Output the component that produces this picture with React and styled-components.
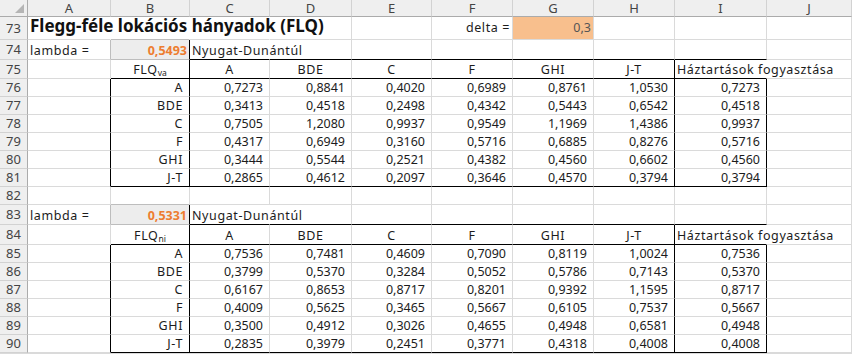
import styled, { createGlobalStyle } from "styled-components";

// Excel-szerű munkalap: FLQ táblák
const columns = ["A", "B", "C", "D", "E", "F", "G", "H", "I", "J"];
const sectors = ["A", "BDE", "C", "F", "GHI", "J-T"];

const flqVa = [
  ["0,7273", "0,8841", "0,4020", "0,6989", "0,8761", "1,0530", "0,7273"],
  ["0,3413", "0,4518", "0,2498", "0,4342", "0,5443", "0,6542", "0,4518"],
  ["0,7505", "1,2080", "0,9937", "0,9549", "1,1969", "1,4386", "0,9937"],
  ["0,4317", "0,6949", "0,3160", "0,5716", "0,6885", "0,8276", "0,5716"],
  ["0,3444", "0,5544", "0,2521", "0,4382", "0,4560", "0,6602", "0,4560"],
  ["0,2865", "0,4612", "0,2097", "0,3646", "0,4570", "0,3794", "0,3794"],
];

const flqNi = [
  ["0,7536", "0,7481", "0,4609", "0,7090", "0,8119", "1,0024", "0,7536"],
  ["0,3799", "0,5370", "0,3284", "0,5052", "0,5786", "0,7143", "0,5370"],
  ["0,6167", "0,8653", "0,8717", "0,8201", "0,9392", "1,1595", "0,8717"],
  ["0,4009", "0,5625", "0,3465", "0,5667", "0,6105", "0,7537", "0,5667"],
  ["0,3500", "0,4912", "0,3026", "0,4655", "0,4948", "0,6581", "0,4948"],
  ["0,2835", "0,3979", "0,2451", "0,3771", "0,4318", "0,4008", "0,4008"],
];

const GlobalStyle = createGlobalStyle`
  html, body {
    margin: 0;
    background: #fff;
    overflow: hidden;
  }
  body {
    font-family: "Noto Sans", "DejaVu Sans", sans-serif;
  }
`;

// k = fekete keret, x = nincs, g = sötétebb szürke, egyébként rácsvonal
const lines = { k: "#000", x: "transparent", g: "#bdbdbd" };
const edge = (v) => lines[v] || "#dadada";
const justify = { left: "flex-start", right: "flex-end", center: "center" };

const Sheet = styled.div`
  display: grid;
  grid-template-columns: 28px 83px 79px 80px 82px 80px 81px 81px 81px 92px 85px;
  grid-template-rows:
    17px 23px 20px 19px repeat(6, 18px)
    18px 20px 20px repeat(6, 18px);
  width: 852px;
  color: #1c1c1c;
  border-bottom: 1px solid #dadada;
`;

const Corner = styled.div`
  display: flex;
  align-items: flex-end;
  justify-content: flex-end;
  padding: 0 3px 3px 0;
  box-sizing: border-box;
  background: #efefef;
  border-right: 1px solid #ababab;
  border-bottom: 1px solid #ababab;
`;

const ColHead = styled.div`
  display: flex;
  align-items: center;
  justify-content: center;
  box-sizing: border-box;
  background: #efefef;
  border-right: 1px solid #d2d2d2;
  border-bottom: 1px solid #ababab;
  font-size: 13px;
  line-height: 15px;
  color: #444;
`;

const RowHead = styled.div`
  display: flex;
  align-items: center;
  justify-content: center;
  box-sizing: border-box;
  background: #efefef;
  border-right: 1px solid #ababab;
  border-bottom: 1px solid #d2d2d2;
  font-size: 13px;
  line-height: 15px;
  color: #444;
`;

const Cell = styled.div`
  display: flex;
  align-items: flex-end;
  justify-content: ${({ $align }) => justify[$align || "left"]};
  box-sizing: border-box;
  min-width: 0;
  padding: 0 ${({ $pr }) => $pr ?? 2}px 0 ${({ $pl }) => $pl ?? 2}px;
  border-right: 1px solid ${({ $r }) => edge($r)};
  border-bottom: 1px solid ${({ $b }) => edge($b)};
  background: ${({ $bg }) => $bg || "transparent"};
  font-size: 12.5px;
  line-height: 16px;
  letter-spacing: ${({ $num }) => ($num ? 0 : 0.6)}px;
  white-space: nowrap;
`;

const TitleCell = styled(Cell)`
  padding-bottom: 3px;
  font-size: 17px;
  font-weight: 700;
  line-height: 20px;
  letter-spacing: 0;
  color: #111;
`;

const PlainRow73 = styled(Cell)`
  padding-bottom: 3px;
`;

const DeltaValue = styled(PlainRow73)`
  color: #555;
  letter-spacing: 0;
`;

const LambdaValue = styled(Cell)`
  font-weight: 700;
  color: #ed7d31;
  letter-spacing: 0;
`;

const Label = styled.span`
  display: inline-block;
`;

const Sub = styled.sub`
  font-size: 8.5px;
  line-height: 0;
  vertical-align: -2px;
  letter-spacing: 0;
`;

const Triangle = () => (
  <svg width="9" height="9" viewBox="0 0 9 9">
    <polygon points="9,0 9,9 0,9" fill="#b5b5b5" />
  </svg>
);

const FlqTable = ({ start, lambda, sub, rows }) => (
  <>
    {/* lambda sor */}
    <RowHead>{start}</RowHead>
    <Cell $r="g">lambda =</Cell>
    <LambdaValue $align="right" $bg="#ededed" $r="k" $b="g">
      {lambda}
    </LambdaValue>
    <Cell $r="x" $b="k">
      Nyugat-Dunántúl
    </Cell>
    {[0, 1, 2, 3, 4, 5].map((i) => (
      <Cell key={i} $b="k" />
    ))}
    <Cell />

    {/* fejléc */}
    <RowHead>{start + 1}</RowHead>
    <Cell />
    <Cell $align="center" $r="k" $b="k">
      <Label>
        FLQ<Sub>{sub}</Sub>
      </Label>
    </Cell>
    {sectors.map((s) => (
      <Cell key={s} $align="center" $b="k" $r={s === "J-T" ? "k" : undefined}>
        {s}
      </Cell>
    ))}
    <Cell $r="x" $b="k">
      Háztartások fogyasztása
    </Cell>
    <Cell />

    {/* adatok */}
    {rows.map((vals, r) => {
      const last = r === rows.length - 1 ? "k" : undefined;
      return [
        <RowHead key={`h${r}`}>{start + 2 + r}</RowHead>,
        <Cell key={`a${r}`} $r="k" />,
        <Cell key={`b${r}`} $align="right" $pr={6} $r="k" $b={last}>
          {sectors[r]}
        </Cell>,
        ...vals.map((v, c) => (
          <Cell
            key={`v${r}-${c}`}
            $num
            $align="right"
            $pr={6}
            $b={last}
            $r={c >= 5 ? "k" : undefined}
          >
            {v}
          </Cell>
        )),
        <Cell key={`j${r}`} />,
      ];
    })}
  </>
);

const EmptyRow = ({ n, cells = {} }) => (
  <>
    <RowHead>{n}</RowHead>
    {columns.map((c) => (
      <Cell key={c} {...(cells[c] || {})} />
    ))}
  </>
);

const App = () => {
  return (
    <>
      <GlobalStyle />
      <Sheet>
        <Corner>
          <Triangle />
        </Corner>
        {columns.map((c) => (
          <ColHead key={c}>{c}</ColHead>
        ))}

        {/* 73. sor: cím */}
        <RowHead>73</RowHead>
        <TitleCell $r="x">Flegg-féle lokációs hányadok (FLQ)</TitleCell>
        <Cell $r="x" $b="g" />
        <Cell $r="x" />
        <Cell />
        <Cell />
        <PlainRow73 $align="right">delta =</PlainRow73>
        <DeltaValue $align="right" $bg="#f8bf8d">
          0,3
        </DeltaValue>
        <Cell />
        <Cell />
        <Cell />

        <FlqTable start={74} lambda="0,5493" sub="va" rows={flqVa} />
        <EmptyRow n={82} cells={{ B: { $b: "g" } }} />
        <FlqTable start={83} lambda="0,5331" sub="ni" rows={flqNi} />
      </Sheet>
    </>
  );
};

export default App;
